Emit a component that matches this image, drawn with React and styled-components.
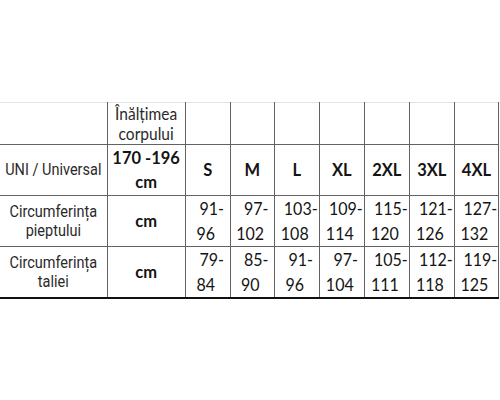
import React from "react";
import styled, { createGlobalStyle } from "styled-components";

const GlobalStyle = createGlobalStyle`
    html, body {
        margin: 0;
        padding: 0;
        background: #fff;
    }
    body {
        width: 500px;
        height: 400px;
        overflow: hidden;
    }
`;

const sizes = ["S", "M", "L", "XL", "2XL", "3XL", "4XL"];
const widths = [107, 78, 45, 44, 45, 45, 45, 45, 44];

const chest = [
    ["91-", "96"], ["97-", "102"], ["103-", "108"], ["109-", "114"],
    ["115-", "120"], ["121-", "126"], ["127-", "132"]
];
const waist = [
    ["79-", "84"], ["85-", "90"], ["91-", "96"], ["97-", "104"],
    ["105-", "111"], ["112-", "118"], ["119-", "125"]
];

export default function App() {
    return (
        <>
            <GlobalStyle />
            <Page>
                <SizeTable>
                    <colgroup>
                        {widths.map((w, i) => <col key={i} style={{ width: w }} />)}
                    </colgroup>
                    <tbody>
                        <HeaderRow>
                            <LabelCell />
                            <TextCell $align="bottom">
                                <Line $lh={20}>Înălțimea</Line>
                                <Line $lh={20}>corpului</Line>
                            </TextCell>
                            {sizes.map(s => <TextCell key={s} />)}
                        </HeaderRow>
                        <BodyRow $h={51}>
                            <LabelCell>
                                <Line $lh={20} $stretch={1.15}>UNI / Universal</Line>
                            </LabelCell>
                            <BoldCell>
                                <Line $lh={24}>170 -196</Line>
                                <Line $lh={24}>cm</Line>
                            </BoldCell>
                            {sizes.map(s => <BoldCell key={s}>{s}</BoldCell>)}
                        </BodyRow>
                        <BodyRow $h={51}>
                            <LabelCell>
                                <Line $lh={19} $stretch={1.15}>Circumferința</Line>
                                <Line $lh={19} $stretch={1.15}>pieptului</Line>
                            </LabelCell>
                            <BoldCell>cm</BoldCell>
                            {chest.map(([a, b]) => (
                                <NumberCell key={a}>
                                    <Line $lh={25} $shift={4}>{a}</Line>
                                    <Line $lh={25} $shift={-2}>{b}</Line>
                                </NumberCell>
                            ))}
                        </BodyRow>
                        <LastRow $h={50}>
                            <LabelCell>
                                <Line $lh={19} $stretch={1.15}>Circumferința</Line>
                                <Line $lh={19} $stretch={1.15}>taliei</Line>
                            </LabelCell>
                            <BoldCell>cm</BoldCell>
                            {waist.map(([a, b]) => (
                                <NumberCell key={a}>
                                    <Line $lh={25} $shift={4}>{a}</Line>
                                    <Line $lh={25} $shift={-2}>{b}</Line>
                                </NumberCell>
                            ))}
                        </LastRow>
                    </tbody>
                </SizeTable>
            </Page>
        </>
    );
}

const Page = styled.div`
    padding-top: 102px;
`;

const SizeTable = styled.table`
    width: 499px;
    table-layout: fixed;
    border-collapse: collapse;
    color: #141414;
    font-family: Lato, "Liberation Sans", sans-serif;

    td {
        border: 1px solid #626262;
        padding: 0;
        text-align: center;
        vertical-align: middle;
        overflow: visible;
        white-space: nowrap;
    }
    td:first-child {
        border-left: none;
    }
`;

const HeaderRow = styled.tr`
    height: 42px;

    td {
        border-top: 1px solid #e4e4e4;
    }
`;

const BodyRow = styled.tr`
    height: ${p => p.$h}px;
`;

const LastRow = styled(BodyRow)`
    td {
        border-bottom: 2px solid #111;
    }
`;

const LabelCell = styled.td`
    font-family: Roboto, "Liberation Sans", sans-serif;
    font-size: 14.5px;
    color: #2a2a2a;
`;

const TextCell = styled.td`
    font-size: 15.5px;
    vertical-align: ${p => (p.$align === "bottom" ? "bottom" : "middle")} !important;
    color: #2a2a2a;
`;

const BoldCell = styled.td`
    font-size: 16.5px;
    font-weight: 700;
`;

const NumberCell = styled.td`
    font-size: 16px;
`;

const Line = styled.div`
    line-height: ${p => p.$lh}px;
    padding-left: ${p => (p.$shift > 0 ? p.$shift * 2 : 0)}px;
    padding-right: ${p => (p.$shift < 0 ? -p.$shift * 2 : 0)}px;
    transform: scaleY(${p => p.$stretch || 1.06});
`;
